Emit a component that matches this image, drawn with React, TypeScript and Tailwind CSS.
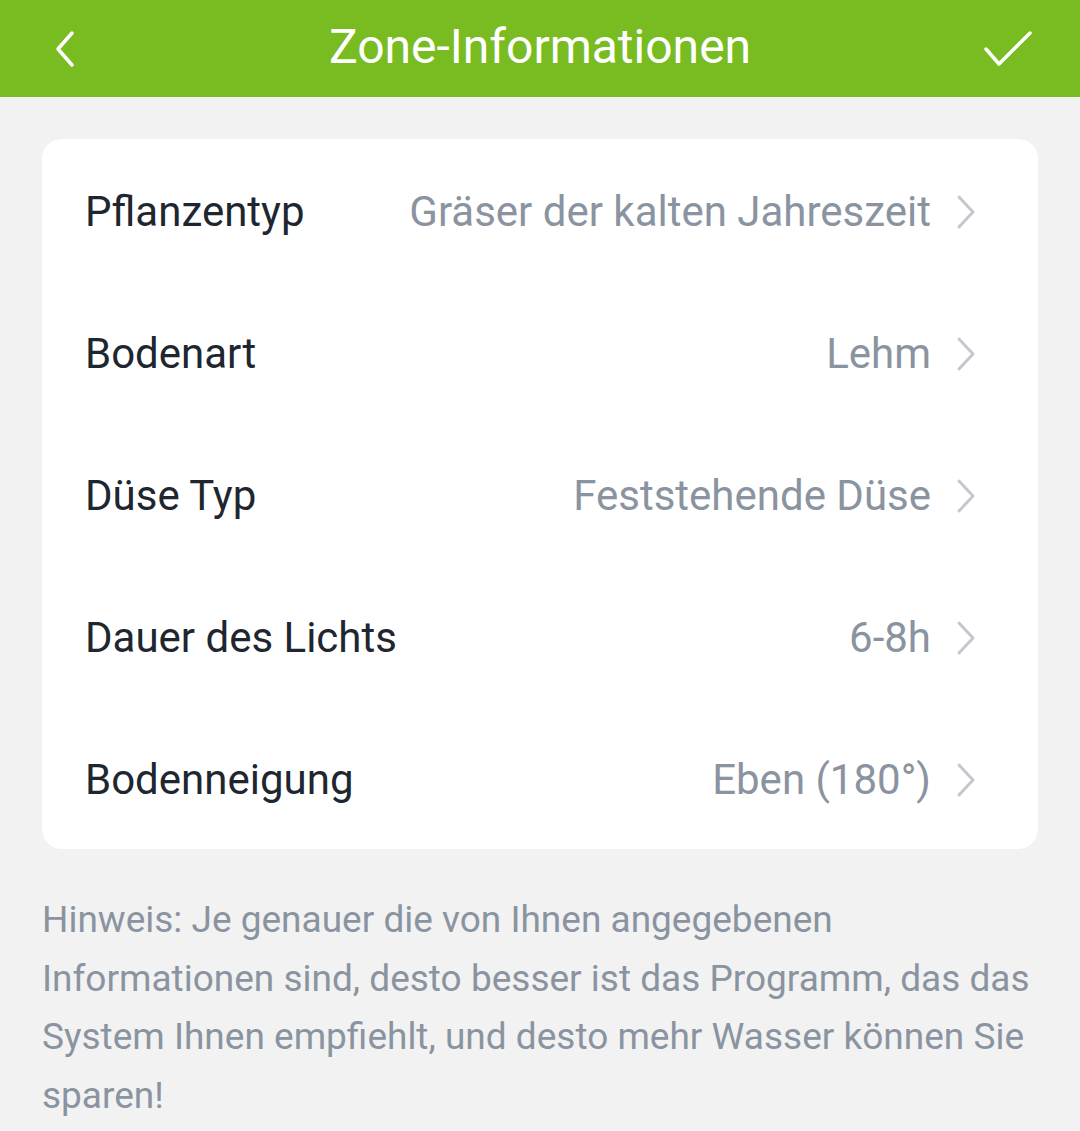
import React from "react";

const rows = [
  { label: "Pflanzentyp", value: "Gräser der kalten Jahreszeit" },
  { label: "Bodenart", value: "Lehm" },
  { label: "Düse Typ", value: "Feststehende Düse" },
  { label: "Dauer des Lichts", value: "6-8h" },
  { label: "Bodenneigung", value: "Eben (180°)" },
];

function Chevron() {
  return (
    <svg width="20" height="36" viewBox="0 0 20 36" fill="none" className="shrink-0">
      <path d="M3 3 L17 18 L3 33" stroke="#c4c8ce" strokeWidth="3" strokeLinecap="round" strokeLinejoin="round" />
    </svg>
  );
}

export default function App() {
  return (
    <div className="w-[1080px] h-[1131px] bg-[#f2f2f2] overflow-hidden" style={{ fontFamily: "Roboto, 'Noto Sans', sans-serif" }}>
      <div className="h-[97px] bg-[#78bc22] flex items-center justify-between px-[52px] relative">
        <svg width="26" height="40" viewBox="0 0 26 40" fill="none">
          <path d="M20 4 L6 20 L20 36" stroke="white" strokeWidth="3.5" strokeLinecap="round" strokeLinejoin="round" />
        </svg>
        <div className="absolute inset-x-0 top-0 h-[94px] flex items-center justify-center pointer-events-none">
          <span className="text-white text-[48px] leading-none">Zone-Informationen</span>
        </div>
        <svg width="52" height="40" viewBox="0 0 52 40" fill="none" className="mr-[-6px]">
          <path d="M4 20 L17 35 L48 4" stroke="white" strokeWidth="3.5" strokeLinecap="round" strokeLinejoin="round" />
        </svg>
      </div>
      <div className="px-[42px] pt-[42px]">
        <div className="bg-white rounded-[20px] flex flex-col">
          {rows.map((r) => (
            <div key={r.label} className="h-[142px] flex items-center pl-[43px] pr-[62px] pt-[3px]">
              <span className="text-[#1e2630] text-[42px] leading-none whitespace-nowrap">{r.label}</span>
              <span className="ml-auto text-[#8a94a0] text-[42px] leading-none whitespace-nowrap mr-[25px]">{r.value}</span>
              <Chevron />
            </div>
          ))}
        </div>
        <p className="mt-[42px] text-[#8a94a0] text-[37px] leading-[58.5px] -mr-[10px]">
          Hinweis: Je genauer die von Ihnen angegebenen Informationen sind, desto besser ist das Programm, das das System Ihnen empfiehlt, und desto mehr Wasser können Sie sparen!
        </p>
      </div>
    </div>
  );
}
